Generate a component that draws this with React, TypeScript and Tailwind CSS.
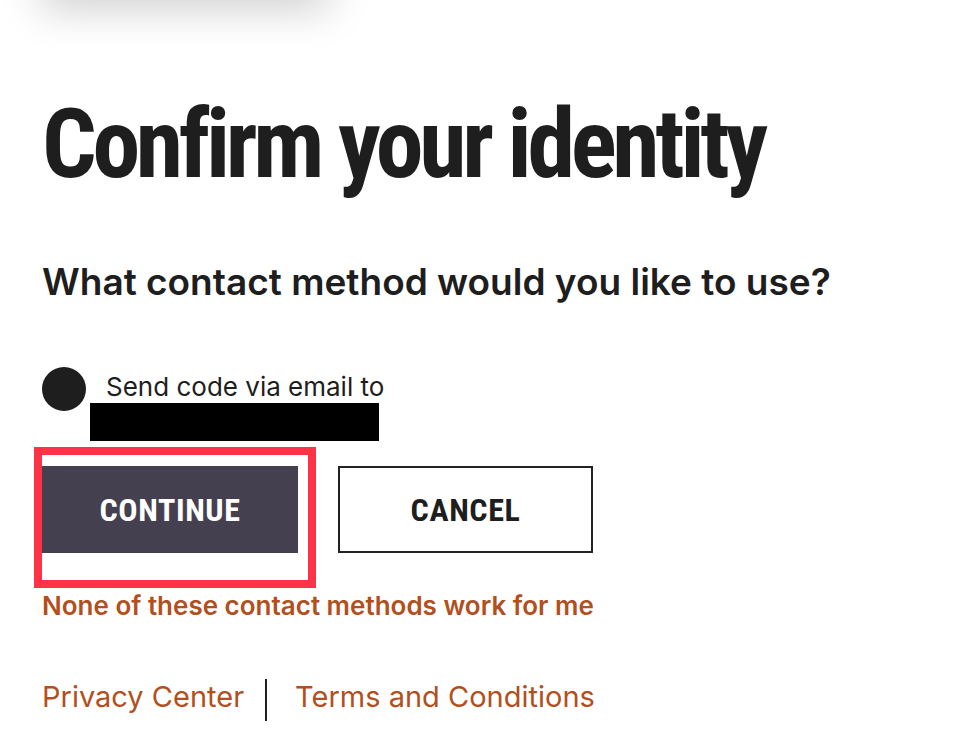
const condensed = "font-bold font-stretch-condensed [font-family:'Roboto_Condensed',Roboto,sans-serif]";

export default function App() {
  return (
    <div className="relative min-h-[743px] w-[968px] overflow-hidden bg-white text-[#1e1e1e] [font-family:Inter,'Noto_Sans',sans-serif]">
      {/* header card above the fold, only its shadow shows */}
      <div className="mx-[40px] -mt-[60px] h-[60px] w-[290px] bg-white shadow-[0_10px_40px_rgba(0,0,0,0.18)]" />

      <main className="pl-[42px]">
        <h1 className={`mt-[96px] text-[96px] leading-none tracking-[-4.3px] ${condensed}`}>
          Confirm your identity
        </h1>

        <p className="mt-[67px] text-[37px] leading-tight font-semibold">
          What contact method would you like to use?
        </p>

        <div className="mt-[62px] flex items-start">
          <span className="h-[44px] w-[44px] shrink-0 rounded-full bg-[#1e1e1e]" />
          <div className="ml-[20px] pt-[4px]">
            <div className="text-[26px] leading-[32px]">Send code via email to</div>
            <div className="-ml-[16px] h-[38px] w-[289px] bg-black" />
          </div>
        </div>

        <div className="mt-[6px] flex items-start">
          <div className="-ml-[8px] border-[8px] border-[#ff3347] pt-[11px] pr-[10px] pb-[27px]">
            <button
              type="button"
              className={`block h-[87px] w-[256px] bg-[#45404f] text-[32px] tracking-[0.6px] text-white ${condensed}`}
            >
              CONTINUE
            </button>
          </div>
          <button
            type="button"
            className={`mt-[19px] ml-[22px] h-[87px] w-[255px] border-2 border-[#222] text-[32px] tracking-[0.6px] text-[#1e1e1e] ${condensed}`}
          >
            CANCEL
          </button>
        </div>

        <a className="mt-[2px] block text-[26px] leading-[32px] font-semibold text-[#b24f1d]">
          None of these contact methods work for me
        </a>

        <div className="mt-[57px] flex items-start text-[29px] leading-[36px] text-[#b24f1d]">
          <a>Privacy Center</a>
          <span className="mx-[21px] h-[42px] w-[2px] bg-[#1e1e1e]" />
          <a className="ml-[7px]">Terms and Conditions</a>
        </div>
      </main>
    </div>
  );
}
